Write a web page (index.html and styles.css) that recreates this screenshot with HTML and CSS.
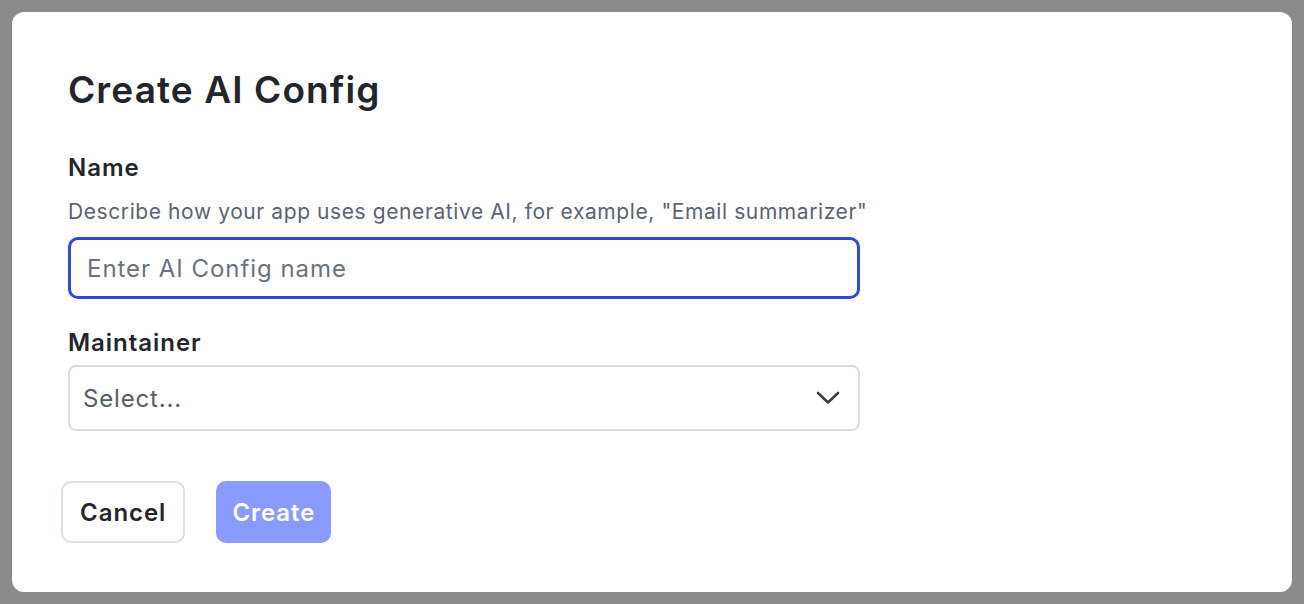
FILE: index.html
```html
<!DOCTYPE html>
<html lang="en">
<head>
<meta charset="utf-8">
<title>Create AI Config</title>
<link rel="stylesheet" href="styles.css">
</head>
<body>
<div class="dialog">
  <h1 class="title">Create AI Config</h1>
  <form class="form">
    <label class="label" for="name">Name</label>
    <p class="hint">Describe how your app uses generative AI, for example, "Email summarizer"</p>
    <input id="name" class="input" type="text" placeholder="Enter AI Config name">
    <label class="label label-maint">Maintainer</label>
    <div class="select">
      <span class="select-text">Select...</span>
      <svg class="chevron" width="24" height="14" viewBox="0 0 24 14" aria-hidden="true">
        <path d="M2 2 L12 11.5 L22 2" fill="none" stroke="#3a3f47" stroke-width="2.6" stroke-linecap="round" stroke-linejoin="round"/>
      </svg>
    </div>
    <div class="actions">
      <button type="button" class="btn btn-cancel">Cancel</button>
      <button type="button" class="btn btn-create">Create</button>
    </div>
  </form>
</div>
</body>
</html>
```

FILE: styles.css
```css
* { box-sizing: border-box; }

html, body {
  margin: 0;
  padding: 0;
}

body {
  background: #8b8b8b;
  font-family: Inter, "Noto Sans", sans-serif;
  width: 1304px;
  height: 604px;
  overflow: hidden;
}

.dialog {
  margin: 12px;
  width: 1280px;
  height: 580px;
  background: #ffffff;
  border-radius: 12px;
  padding: 56px 56px 49px 56px;
}

.title {
  margin: 0;
  font-size: 37px;
  line-height: 44px;
  font-weight: 600;
  color: #23252b;
  letter-spacing: 0.03em;
}

.form {
  display: flex;
  flex-direction: column;
  width: 792px;
}

.label {
  margin-top: 42px;
  font-size: 24px;
  line-height: 28px;
  font-weight: 600;
  color: #23252b;
  letter-spacing: 0.04em;
}

.label-maint {
  margin-top: 30px;
}

.hint {
  margin: 16px 0 0 0;
  font-size: 21px;
  line-height: 28px;
  color: #5c6370;
  letter-spacing: 0.028em;
  white-space: nowrap;
}

.input {
  margin-top: 11px;
  height: 62px;
  width: 100%;
  border: 3px solid #3347d6;
  border-radius: 10px;
  padding: 0 16px;
  font-family: inherit;
  font-size: 24px;
  letter-spacing: 0.04em;
  color: #23252b;
  outline: none;
}

.input::placeholder {
  color: #6b717c;
}

.select {
  margin-top: 8px;
  height: 66px;
  border: 2px solid #d9dde3;
  border-radius: 8px;
  display: flex;
  align-items: center;
  justify-content: space-between;
  padding: 0 18px 0 13px;
}

.select-text {
  font-size: 24px;
  letter-spacing: 0.035em;
  color: #575d68;
}

.chevron {
  display: block;
}

.actions {
  margin-top: 50px;
  margin-left: -7px;
  display: flex;
  gap: 31px;
}

.btn {
  height: 62px;
  border-radius: 10px;
  font-family: inherit;
  font-size: 24px;
  font-weight: 600;
  letter-spacing: 0.04em;
  padding: 0 17px;
  cursor: pointer;
}

.btn-cancel {
  background: #ffffff;
  border: 2px solid #dde1e7;
  color: #23252b;
}

.btn-create {
  background: #8a9bff;
  border: 2px solid #8a9bff;
  color: #ffffff;
  padding: 0 14px;
}
```
